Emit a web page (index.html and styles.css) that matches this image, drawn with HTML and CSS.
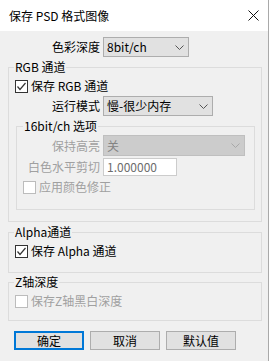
FILE: index.html
```html
<!DOCTYPE html>
<html lang="zh-CN">
<head>
    <meta charset="UTF-8">
    <meta name="viewport" content="width=device-width, initial-scale=1.0">
    <title>保存 PSD 格式图像</title>
    <link rel="stylesheet" href="styles.css">
</head>
<body>

<div class="dialog">
    <div class="titlebar">
        <span class="title">保存 PSD 格式图像</span>
        <svg class="close" width="11" height="11" viewBox="0 0 11 11">
            <path d="M0.5 0.5L10.5 10.5M10.5 0.5L0.5 10.5" stroke="#111" stroke-width="1"/>
        </svg>
    </div>

    <div class="content">
        <div class="row top-row">
            <span class="lbl lbl-top">色彩深度</span>
            <div class="select sel-depth">
                <span>8bit/ch</span>
                <svg class="chev" width="9" height="5" viewBox="0 0 9 5"><path d="M0.5 0.5L4.5 4.5L8.5 0.5" fill="none" stroke="#555"/></svg>
            </div>
        </div>

        <fieldset class="group rgb">
            <legend>RGB 通道</legend>
            <div class="check-row">
                <span class="box checked">
                    <svg width="11" height="11" viewBox="0 0 11 11"><path d="M1.5 5.5L4 8.5L9.5 2" fill="none" stroke="#333" stroke-width="1.2"/></svg>
                </span>
                <span>保存 RGB 通道</span>
            </div>
            <div class="row mode-row">
                <span class="lbl lbl-mode">运行模式</span>
                <div class="select sel-mode">
                    <span>慢-很少内存</span>
                    <svg class="chev" width="9" height="5" viewBox="0 0 9 5"><path d="M0.5 0.5L4.5 4.5L8.5 0.5" fill="none" stroke="#555"/></svg>
                </div>
            </div>

            <fieldset class="group sub">
                <legend>16bit/ch 选项</legend>
                <div class="row sub-row first">
                    <span class="lbl lbl-sub off">保持高亮</span>
                    <div class="select sel-high disabled">
                        <span>关</span>
                        <svg class="chev" width="9" height="5" viewBox="0 0 9 5"><path d="M0.5 0.5L4.5 4.5L8.5 0.5" fill="none" stroke="#a8a8a8"/></svg>
                    </div>
                </div>
                <div class="row sub-row">
                    <span class="lbl lbl-sub off">白色水平剪切</span>
                    <div class="textbox">1.000000</div>
                </div>
                <div class="check-row sub-check off">
                    <span class="box disabled"></span>
                    <span>应用颜色修正</span>
                </div>
            </fieldset>
        </fieldset>

        <fieldset class="group alpha">
            <legend>Alpha通道</legend>
            <div class="check-row">
                <span class="box checked">
                    <svg width="11" height="11" viewBox="0 0 11 11"><path d="M1.5 5.5L4 8.5L9.5 2" fill="none" stroke="#333" stroke-width="1.2"/></svg>
                </span>
                <span>保存 Alpha 通道</span>
            </div>
        </fieldset>

        <fieldset class="group zdepth">
            <legend>Z轴深度</legend>
            <div class="check-row off">
                <span class="box disabled"></span>
                <span>保存Z轴黑白深度</span>
            </div>
        </fieldset>

        <div class="buttons">
            <button class="btn default">确定</button>
            <button class="btn">取消</button>
            <button class="btn">默认值</button>
        </div>
    </div>
</div>

</body>
</html>
```

FILE: styles.css
```css
* {
    box-sizing: border-box;
}
body {
    margin: 0;
    font-family: "Noto Sans CJK SC", "Noto Sans", sans-serif;
    font-size: 12px;
    color: #000;
}
.dialog {
    width: 269px;
    height: 361px;
    background-color: #f0f0f0;
    border-right: 1px solid #a9a9a9;
    display: flex;
    flex-direction: column;
}
.titlebar {
    height: 31px;
    flex: none;
    background-color: #fff;
    display: flex;
    align-items: center;
    justify-content: space-between;
    padding: 0 9px 0 9px;
}
.title {
    line-height: 14px;
}
.content {
    padding-top: 6px;
}
.row {
    display: flex;
    align-items: center;
}
.lbl {
    text-align: right;
    padding-right: 3px;
    line-height: 14px;
    white-space: nowrap;
}
.lbl-top {
    width: 103px;
}
.lbl-mode {
    width: 89px;
}
.lbl-sub {
    width: 80px;
}
.off {
    color: #a0a0a0;
}
.select {
    height: 20px;
    border: 1px solid #adadad;
    background-color: #e1e1e1;
    padding: 0 4px 0 3px;
    display: flex;
    align-items: center;
    justify-content: space-between;
    line-height: 14px;
}
.select.disabled {
    background-color: #cccccc;
    border-color: #bfbfbf;
    color: #838383;
    height: 21px;
}
.sel-depth {
    width: 86px;
}
.sel-mode {
    width: 110px;
}
.sel-high {
    width: 142px;
}
.textbox {
    width: 74px;
    height: 18px;
    background-color: #fff;
    border: 1px solid #cccccc;
    color: #6d6d6d;
    padding-left: 3px;
    line-height: 16px;
}
.group {
    border: 1px solid #dcdcdc;
    margin: 0;
    min-width: 0;
}
.group legend {
    padding: 0 1px;
    line-height: 14px;
}
.rgb {
    margin: 3px 6px 0 8px;
    padding: 0 6px 11px 5px;
}
.sub {
    margin: 3px 0 0 2px;
    padding: 0 6px 14px 6px;
}
.alpha {
    margin: 3px 6px 0 8px;
    padding: 0 6px 13px 5px;
}
.zdepth {
    margin: 2px 6px 0 8px;
    padding: 0 6px 11px 5px;
}
.check-row {
    display: flex;
    align-items: center;
    height: 16px;
    margin-top: 4px;
    margin-left: 1px;
    line-height: 14px;
}
.sub-check {
    margin-top: 3px;
    margin-left: 0;
}
.box {
    width: 13px;
    height: 13px;
    border: 1px solid #333;
    background-color: #fff;
    margin-right: 3px;
    display: flex;
    align-items: center;
    justify-content: center;
}
.box.disabled {
    border-color: #bcbcbc;
}
.mode-row {
    margin-top: 2px;
}
.sub-row {
    margin-top: 2px;
}
.buttons {
    display: flex;
    gap: 6px;
    margin: 10px 0 0 14px;
}
.btn {
    width: 70px;
    height: 19px;
    padding: 0;
    font-family: inherit;
    font-size: 12px;
    line-height: 14px;
    color: #000;
    background-color: #e1e1e1;
    border: 1px solid #adadad;
    border-radius: 0;
}
.btn.default {
    border: 2px solid #0078d7;
}
```
